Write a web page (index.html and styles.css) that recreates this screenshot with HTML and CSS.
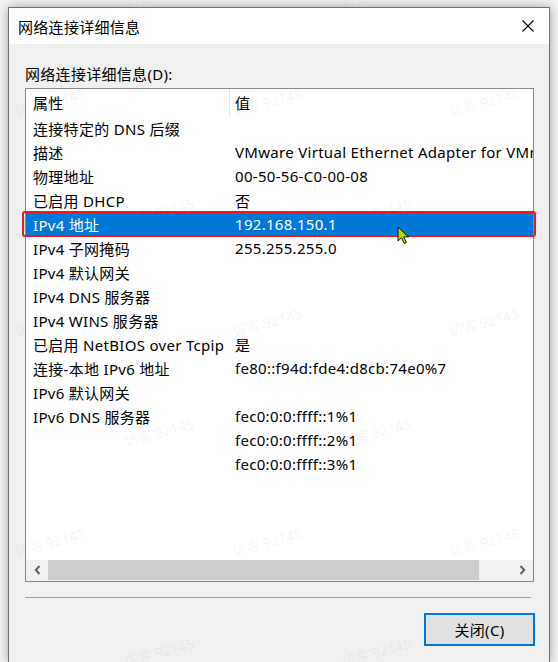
FILE: index.html
```html
<!DOCTYPE html>
<html lang="zh-CN">
<head>
<meta charset="utf-8">
<title>网络连接详细信息</title>
<link rel="stylesheet" href="styles.css">
</head>
<body>
<div class="window">
  <div class="titlebar">
    <span class="title">网络连接详细信息</span>
    <svg class="close" width="12" height="12" viewBox="0 0 12 12"><path d="M0.5 0.5 L11.5 11.5 M11.5 0.5 L0.5 11.5" stroke="#000" stroke-width="1.1" fill="none"/></svg>
  </div>
  <div class="body">
    <div class="label">网络连接详细信息(D):</div>
    <div class="listbox">
      <div class="list">
        <div class="row head"><div class="c1">属性</div><div class="c2">值</div></div>
        <div class="row"><div class="c1">连接特定的 DNS 后缀</div><div class="c2"></div></div>
        <div class="row"><div class="c1">描述</div><div class="c2">VMware Virtual Ethernet Adapter for VMnet1</div></div>
        <div class="row"><div class="c1">物理地址</div><div class="c2">00-50-56-C0-00-08</div></div>
        <div class="row"><div class="c1">已启用 DHCP</div><div class="c2">否</div></div>
        <div class="row sel"><div class="c1">IPv4 地址</div><div class="c2">192.168.150.1</div>
          <svg class="pointer" width="13" height="19" viewBox="0 0 13 19"><path d="M1 1 L1 15 L4.5 11.8 L7.2 17.5 L9.4 16.5 L6.8 10.9 L11.5 10.9 Z" fill="#b4d200" stroke="#111" stroke-width="1" stroke-linejoin="round"/></svg>
        </div>
        <div class="row"><div class="c1">IPv4 子网掩码</div><div class="c2">255.255.255.0</div></div>
        <div class="row"><div class="c1">IPv4 默认网关</div><div class="c2"></div></div>
        <div class="row"><div class="c1">IPv4 DNS 服务器</div><div class="c2"></div></div>
        <div class="row"><div class="c1">IPv4 WINS 服务器</div><div class="c2"></div></div>
        <div class="row"><div class="c1">已启用 NetBIOS over Tcpip</div><div class="c2">是</div></div>
        <div class="row"><div class="c1">连接-本地 IPv6 地址</div><div class="c2">fe80::f94d:fde4:d8cb:74e0%7</div></div>
        <div class="row"><div class="c1">IPv6 默认网关</div><div class="c2"></div></div>
        <div class="row"><div class="c1">IPv6 DNS 服务器</div><div class="c2">fec0:0:0:ffff::1%1</div></div>
        <div class="row"><div class="c1"></div><div class="c2">fec0:0:0:ffff::2%1</div></div>
        <div class="row"><div class="c1"></div><div class="c2">fec0:0:0:ffff::3%1</div></div>
      </div>
      <div class="hscroll">
        <div class="sbtn"><svg width="7" height="10" viewBox="0 0 7 10"><path d="M5.5 1 L1.8 5 L5.5 9" stroke="#606060" stroke-width="2" fill="none"/></svg></div>
        <div class="thumb"></div>
        <div class="track"></div>
        <div class="sbtn"><svg width="7" height="10" viewBox="0 0 7 10"><path d="M1.5 1 L5.2 5 L1.5 9" stroke="#606060" stroke-width="2" fill="none"/></svg></div>
      </div>
    </div>
    <div class="sep"></div>
    <div class="actions"><button class="btn">关闭(C)</button></div>
  </div>
</div>
<div class="wm">
  <div class="wm-row b"><span>访客 92145</span><span>访客 92145</span><span>访客 92145</span></div>
  <div class="wm-row a"><span>访客 92145</span><span>访客 92145</span><span>访客 92145</span></div>
  <div class="wm-row b"><span>访客 92145</span><span>访客 92145</span><span>访客 92145</span></div>
  <div class="wm-row a"><span>访客 92145</span><span>访客 92145</span><span>访客 92145</span></div>
  <div class="wm-row b"><span>访客 92145</span><span>访客 92145</span><span>访客 92145</span></div>
  <div class="wm-row a"><span>访客 92145</span><span>访客 92145</span><span>访客 92145</span></div>
  <div class="wm-row b"><span>访客 92145</span><span>访客 92145</span><span>访客 92145</span></div>
</div>
</body>
</html>
```

FILE: styles.css
```css
* { box-sizing: border-box; }
html, body { margin: 0; padding: 0; }
body {
  width: 558px;
  height: 662px;
  overflow: hidden;
  background: #f4f4f4;
  font-family: "Noto Sans", "Noto Sans CJK SC", sans-serif;
  font-size: 15px;
  letter-spacing: 0.3px;
  color: #000;
  position: relative;
}
.window {
  margin: 7px 0 0 8px;
  width: 542px;
  height: 655px;
  overflow: hidden;
  border: 1px solid #707070;
  border-bottom: none;
  background: #f0f0f0;
  box-shadow: 0 0 10px rgba(0,0,0,0.35);
}
.titlebar {
  height: 36px;
  background: #fff;
  display: flex;
  align-items: center;
  justify-content: space-between;
  padding: 0 15px 0 9px;
}
.title { line-height: 20px; padding-top: 1px; }
.close { display: block; }
.body {
  padding: 20px 15px 0 16px;
}
.label {
  line-height: 20px;
  margin-bottom: 4px;
}
.listbox {
  width: 509px;
  height: 494px;
  border: 1px solid #828790;
  background: #fff;
  display: flex;
  flex-direction: column;
}
.list {
  flex: 1;
}
.row {
  height: 24px;
  display: flex;
  align-items: center;
  white-space: nowrap;
  position: relative;
}
.row .c1 {
  flex: none;
  width: 203px;
  padding-left: 7px;
}
.row .c2 {
  flex: 1;
  min-width: 0;
  overflow: hidden;
  padding-left: 6px;
}
.row.head { height: 27px; align-items: stretch; }
.row.head .c1 {
  width: 204px;
  border-right: 1px solid #e5e5e5;
  display: flex;
  align-items: center;
}
.row.head .c2 {
  padding-left: 5px;
  display: flex;
  align-items: center;
}
.row.sel {
  background: #0078d7;
  color: #fff;
}
.row.sel::after {
  content: "";
  position: absolute;
  left: -4px;
  right: -3px;
  top: -1px;
  bottom: -1px;
  border: 2px solid #f01818;
  border-radius: 3px;
}
.pointer {
  position: absolute;
  left: 371px;
  top: 14px;
  z-index: 2;
}
.hscroll {
  height: 21px;
  flex: none;
  display: flex;
  background: #f0f0f0;
  padding-bottom: 1px;
}
.sbtn {
  width: 22px;
  display: flex;
  align-items: center;
  justify-content: center;
}
.thumb {
  width: 431px;
  background: #cdcdcd;
}
.track { flex: 1; }
.sep {
  margin: 15px 3px 0 0;
  height: 1px;
  background: #a0a0a0;
}
.actions {
  display: flex;
  justify-content: flex-end;
  margin: 15px -1px 0 0;
}
.btn {
  width: 111px;
  height: 33px;
  border: 2px solid #0078d7;
  background: #e1e1e1;
  font-family: inherit;
  font-size: 15px;
  letter-spacing: 0.3px;
  color: #000;
  padding: 0;
}
.wm {
  position: absolute;
  inset: 0;
  pointer-events: none;
  overflow: hidden;
  display: flex;
  flex-direction: column;
}
.wm-row {
  height: 110px;
  flex: none;
  display: flex;
  align-items: center;
}
.wm-row:first-child { margin-top: -63px; }
.wm-row.a { padding-left: 14px; }
.wm-row.b { padding-left: 123px; }
.wm-row span {
  display: inline-block;
  width: 217px;
  flex: none;
  font-size: 14px;
  letter-spacing: 0;
  color: rgba(0,0,0,0.06);
  white-space: nowrap;
  transform-origin: 35px 50%;
  transform: rotate(-15deg);
}
```
